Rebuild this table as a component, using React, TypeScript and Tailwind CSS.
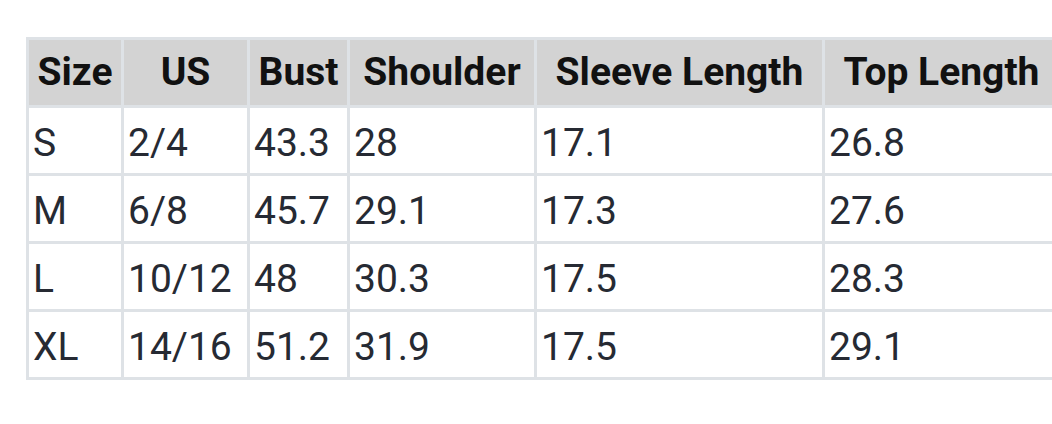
import React from "react";

const headers = ["Size", "US", "Bust", "Shoulder", "Sleeve Length", "Top Length"];
const widths = ["w-[95px]", "w-[126px]", "w-[100px]", "w-[187px]", "w-[288px]", "w-[236px]"];

const rows = [
  ["S", "2/4", "43.3", "28", "17.1", "26.8"],
  ["M", "6/8", "45.7", "29.1", "17.3", "27.6"],
  ["L", "10/12", "48", "30.3", "17.5", "28.3"],
  ["XL", "14/16", "51.2", "31.9", "17.5", "29.1"],
];

const App: React.FC = () => {
  return (
    <div className="h-screen w-screen overflow-hidden bg-white pl-[26px] pt-[37px] font-['Roboto',sans-serif]">
      <table className="table-fixed border-separate border-spacing-0 border-b-[3px] border-r-[3px] border-[#dee2e6] w-[1035px]">
        <colgroup>
          {widths.map((w, i) => (
            <col key={i} className={w} />
          ))}
        </colgroup>
        <thead>
          <tr className="h-[68px]">
            {headers.map((h) => (
              <th
                key={h}
                className="border-l-[3px] border-t-[3px] border-[#dee2e6] bg-[#d3d3d3] px-0 text-center text-[39px] font-bold leading-none whitespace-nowrap text-[#111]"
              >
                {h}
              </th>
            ))}
          </tr>
        </thead>
        <tbody>
          {rows.map((r) => (
            <tr key={r[0]} className="h-[68px]">
              {r.map((c, i) => (
                <td
                  key={i}
                  className="border-l-[3px] border-t-[3px] border-[#dee2e6] px-1 pt-[5px] text-left text-[39px] leading-none whitespace-nowrap text-[#262a33]"
                >
                  {c}
                </td>
              ))}
            </tr>
          ))}
        </tbody>
      </table>
    </div>
  );
};

export default App;
